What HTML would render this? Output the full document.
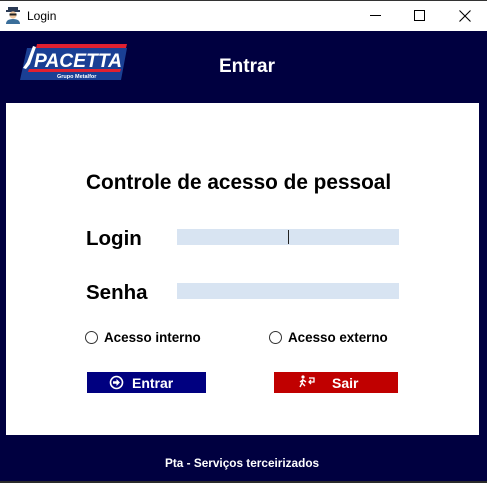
<!DOCTYPE html>
<html><head><meta charset="utf-8"><style>
*{margin:0;padding:0;box-sizing:border-box}
body{width:487px;height:483px;position:relative;overflow:hidden;background:#000040;font-family:"Liberation Sans",Arial,sans-serif}
.a{position:absolute;white-space:nowrap}
.tb{left:0;top:0;width:487px;height:31px;background:#fff;border-top:1px solid #333}
.panel{left:6px;top:103px;width:473px;height:332px;background:#fff}
.b{font-weight:bold;color:#000}
.inp{background:#d8e4f2;width:222px;height:16px;left:177px}
.radio{width:13px;height:13px;border:1px solid #333;border-radius:50%;background:#fff}
</style></head><body>
<div class="a tb"></div>
<svg class="a" style="left:5px;top:7px" width="16" height="17" viewBox="0 0 16 17">
<rect x="3" y="0" width="10" height="4" fill="#2b3b55"/><rect x="1" y="3" width="14" height="2" fill="#2b3b55"/>
<circle cx="8" cy="8" r="3.6" fill="#f0c8a0"/><rect x="4.5" y="6.5" width="7" height="2" fill="#222"/>
<path d="M1 17 Q1 12 8 12 Q15 12 15 17Z" fill="#3a6e9a"/></svg>
<div class="a" style="left:27px;top:9px;font-size:12px;color:#000">Login</div>
<div class="a" style="left:370px;top:15px;width:11px;height:1px;background:#000"></div>
<div class="a" style="left:414px;top:10px;width:11px;height:11px;border:1px solid #000"></div>
<svg class="a" style="left:459px;top:10px" width="12" height="12"><path d="M0.5 0.5L11.5 11.5M11.5 0.5L0.5 11.5" stroke="#000" stroke-width="1.1"/></svg>

<svg class="a" style="left:17px;top:42px" width="112" height="40" viewBox="0 0 112 40">
<polygon points="20,2 110,2 109,6 19,6" fill="#e02030"/>
<polygon points="10,6 110,6 104,38 3,38" fill="#1a3f94"/>
<polygon points="12,27 104,27 103,30 11,30" fill="#e02030"/>
<path d="M16 4 L10 20 L6 26 L9 27 L13 22 L19 5Z" fill="#fff"/>
<text x="17" y="25" font-family="Liberation Sans" font-weight="bold" font-style="italic" font-size="19" fill="#fff" textLength="88" lengthAdjust="spacingAndGlyphs">PACETTA</text>
<text x="40" y="36" font-family="Liberation Sans" font-weight="bold" font-size="5.5" fill="#fff">Grupo Metalfor</text>
</svg>
<div class="a" style="left:219px;top:56px;font-size:19px;font-weight:bold;color:#fff">Entrar</div>

<div class="a panel"></div>
<div class="a b" style="left:86px;top:171px;font-size:20.8px">Controle de acesso de pessoal</div>
<div class="a b" style="left:86px;top:227px;font-size:20.5px">Login</div>
<div class="a b" style="left:86px;top:281px;font-size:20.5px">Senha</div>
<div class="a inp" style="top:229px"></div>
<div class="a" style="left:288px;top:230px;width:1px;height:14px;background:#222"></div>
<div class="a inp" style="top:283px"></div>

<div class="a radio" style="left:85px;top:331px"></div>
<div class="a b" style="left:104px;top:330px;font-size:13.4px">Acesso interno</div>
<div class="a radio" style="left:269px;top:331px"></div>
<div class="a b" style="left:288px;top:330px;font-size:13.4px">Acesso externo</div>

<div class="a" style="left:87px;top:372px;width:119px;height:21px;background:#000080"></div>
<svg class="a" style="left:109px;top:375px" width="15" height="15"><circle cx="7.5" cy="7.5" r="6" fill="none" stroke="#fff" stroke-width="1.6"/><path d="M4 6.3h3.5V4l3.5 3.5-3.5 3.5V8.7H4Z" fill="#fff"/></svg>
<div class="a" style="left:132px;top:375px;font-size:14px;font-weight:bold;color:#fff">Entrar</div>
<div class="a" style="left:274px;top:372px;width:124px;height:21px;background:#c00000"></div>
<svg class="a" style="left:299px;top:375px" width="18" height="14"><circle cx="4" cy="2" r="1.6" fill="#fff"/><path d="M4 4L3 8L1 12M3 8L6 11M4 5L7 7M4 5L1 7" stroke="#fff" stroke-width="1.4" fill="none"/><path d="M10 3h5v4h-4M12 5l-2 2 2 2" stroke="#fff" stroke-width="1.3" fill="none"/></svg>
<div class="a" style="left:332px;top:375px;font-size:14px;font-weight:bold;color:#fff">Sair</div>

<div class="a" style="left:165px;top:456px;font-size:11.8px;font-weight:bold;color:#fff">Pta - Serviços terceirizados</div>
<div class="a" style="left:0;top:481px;width:487px;height:2px;background:#2a2a2a"></div>
</body></html>
